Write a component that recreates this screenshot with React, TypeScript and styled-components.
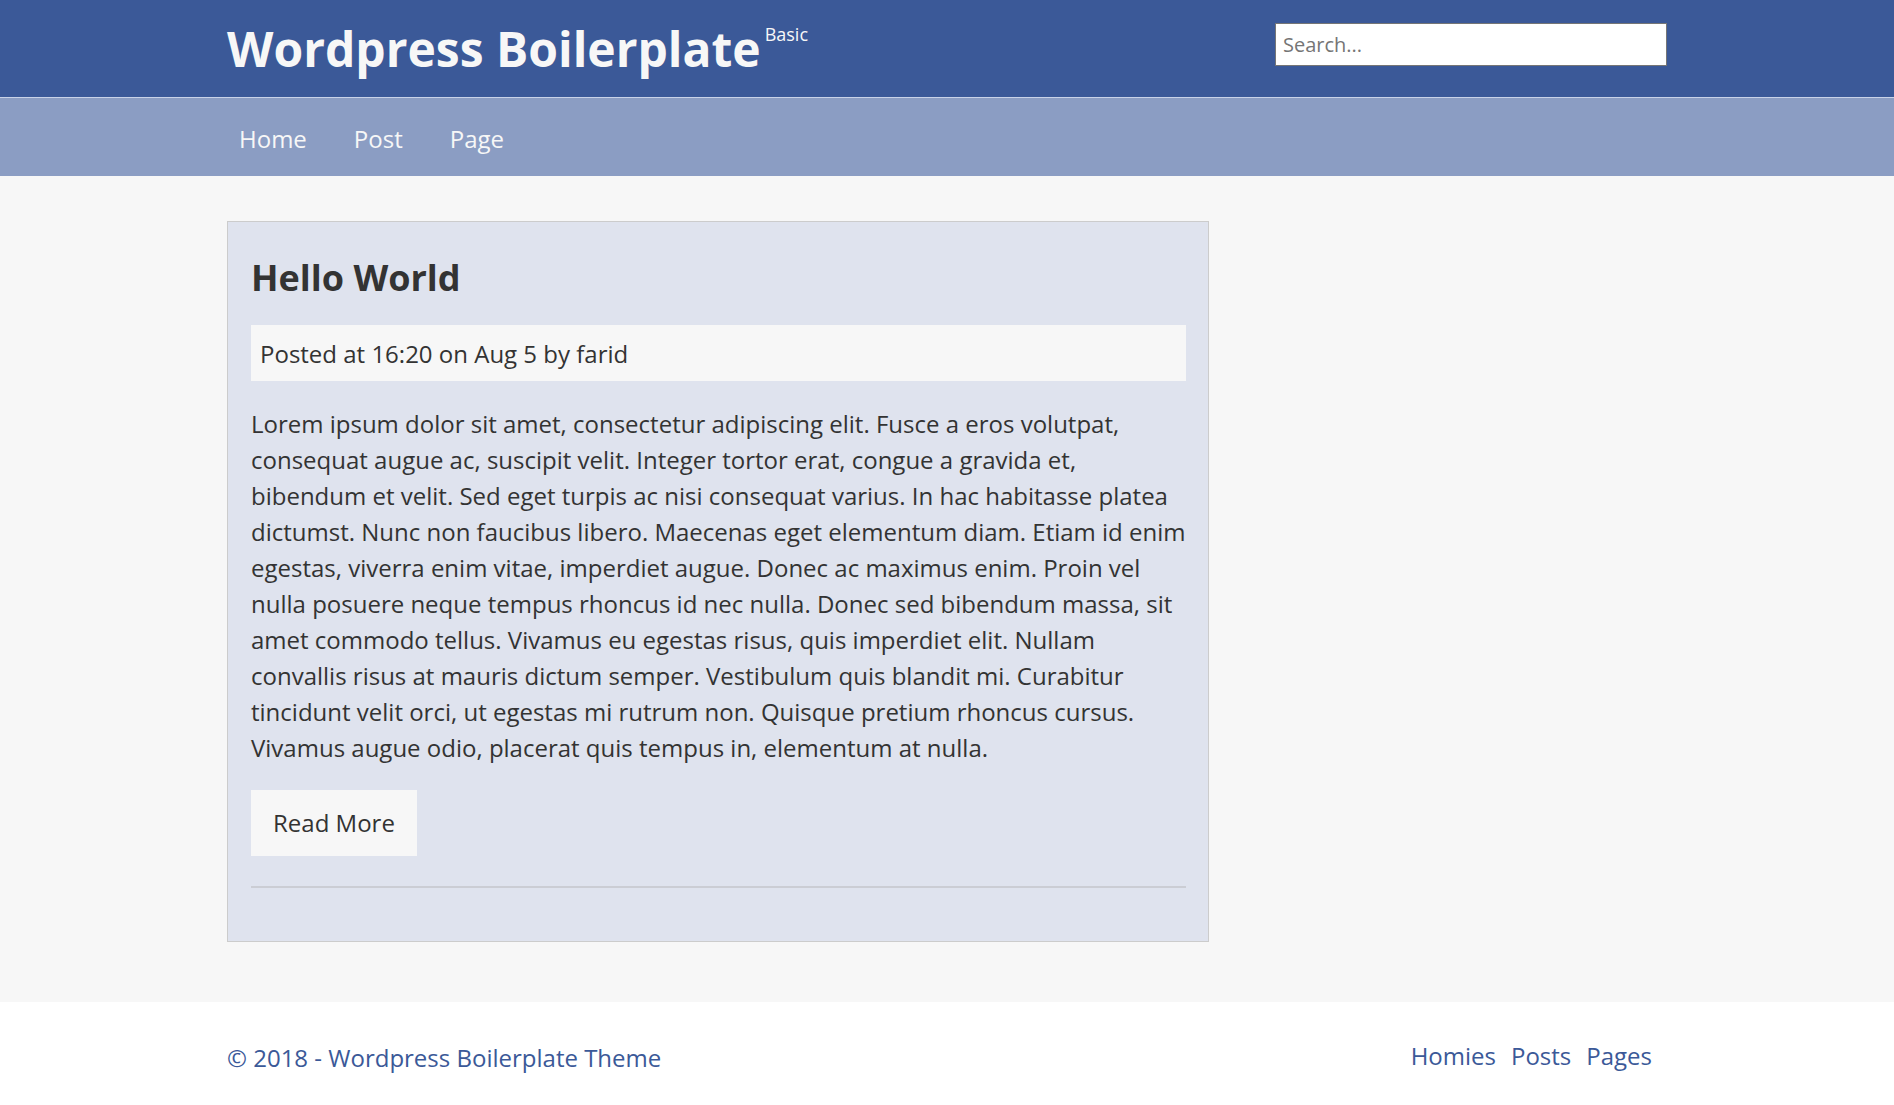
import React from 'react';
import styled, { createGlobalStyle } from 'styled-components';

const GlobalStyle = createGlobalStyle`
    body {
        margin: 0;
        font-family: "Open Sans", "Liberation Sans", sans-serif;
        background: #ffffff;
        color: #333333;
    }
`;

const Container = styled.div`
    width: 1440px;
    margin: 0 auto;
`;

const Header = styled.header`
    background: #3b5998;
    border-bottom: 1px solid #c9d3e8;
`;

const HeaderInner = styled(Container)`
    height: 97px;
    display: flex;
    align-items: center;
    justify-content: space-between;
`;

const Brand = styled.div`
    display: flex;
    align-items: flex-start;
    color: #f7f7f7;
`;

const BrandTitle = styled.h1`
    margin: 0;
    font-size: 48px;
    line-height: 48px;
    font-weight: 700;
`;

const BrandTag = styled.span`
    margin-left: 4px;
    font-size: 18px;
    line-height: 18px;
    font-weight: 400;
`;

const SearchInput = styled.input`
    width: 392px;
    height: 43px;
    margin-bottom: 8px;
    box-sizing: border-box;
    border: 1px solid #767676;
    padding: 0 7px;
    font-family: "Open Sans", "Liberation Sans", sans-serif;
    font-size: 20px;
    color: #333;
    background: #fff;
    outline: none;

    &::placeholder {
        color: #757575;
    }
`;

const Nav = styled.nav`
    background: #8b9dc3;
`;

const NavInner = styled(Container)`
    height: 78px;
    display: flex;
    align-items: center;
    gap: 23px;
`;

const NavLink = styled.a`
    margin-top: 3px;
    padding: 0 12px;
    font-size: 24px;
    line-height: 36px;
    color: #f7f7f7;
    text-decoration: none;
`;

const Main = styled.main`
    background: #f7f7f7;
    padding: 45px 0 60px;
`;

const Card = styled.article`
    width: 982px;
    box-sizing: border-box;
    background: #dfe3ee;
    border: 1px solid #cccccc;
    padding: 23px 22px 53px 23px;
`;

const PostTitle = styled.h2`
    margin: 11px 0 26px;
    font-size: 36px;
    line-height: 43px;
    font-weight: 700;
    color: #333333;
`;

const Meta = styled.div`
    background: #f7f7f7;
    padding: 11px 9px 9px;
    font-size: 24px;
    line-height: 36px;
`;

const Body = styled.p`
    margin: 25px 0 24px;
    font-size: 24px;
    line-height: 36px;
`;

const ReadMore = styled.a`
    display: inline-block;
    background: #f7f7f7;
    padding: 15px 22px;
    font-size: 24px;
    line-height: 36px;
    color: #333333;
    text-decoration: none;
`;

const Divider = styled.hr`
    margin: 30px 0 0;
    border: none;
    border-top: 2px solid #cbcdd4;
`;

const Footer = styled.footer`
    background: #ffffff;
`;

const FooterInner = styled(Container)`
    display: flex;
    align-items: center;
    justify-content: space-between;
    padding: 38px 0 31px;
`;

const Copy = styled.span`
    font-size: 24px;
    line-height: 36px;
    color: #3b5998;
`;

const FooterLinks = styled.div`
    display: flex;
    gap: 15px;
    padding-right: 15px;
    margin-top: -4px;
`;

const FooterLink = styled.a`
    font-size: 24px;
    line-height: 36px;
    color: #3b5998;
    text-decoration: none;
`;

const menu = ['Home', 'Post', 'Page'];
const footerMenu = ['Homies', 'Posts', 'Pages'];

const lorem =
    'Lorem ipsum dolor sit amet, consectetur adipiscing elit. Fusce a eros volutpat, consequat augue ac, suscipit velit. Integer tortor erat, congue a gravida et, bibendum et velit. Sed eget turpis ac nisi consequat varius. In hac habitasse platea dictumst. Nunc non faucibus libero. Maecenas eget elementum diam. Etiam id enim egestas, viverra enim vitae, imperdiet augue. Donec ac maximus enim. Proin vel nulla posuere neque tempus rhoncus id nec nulla. Donec sed bibendum massa, sit amet commodo tellus. Vivamus eu egestas risus, quis imperdiet elit. Nullam convallis risus at mauris dictum semper. Vestibulum quis blandit mi. Curabitur tincidunt velit orci, ut egestas mi rutrum non. Quisque pretium rhoncus cursus. Vivamus augue odio, placerat quis tempus in, elementum at nulla.';

const App: React.FC = () => {
    return (
        <>
            <GlobalStyle />
            <Header>
                <HeaderInner>
                    <Brand>
                        <BrandTitle>Wordpress Boilerplate</BrandTitle>
                        <BrandTag>Basic</BrandTag>
                    </Brand>
                    <SearchInput type="search" placeholder="Search..." />
                </HeaderInner>
            </Header>
            <Nav>
                <NavInner>
                    {menu.map(item => (
                        <NavLink key={item} href="#">{item}</NavLink>
                    ))}
                </NavInner>
            </Nav>
            <Main>
                <Container>
                    <Card>
                        <PostTitle>Hello World</PostTitle>
                        <Meta>Posted at 16:20 on Aug 5 by farid</Meta>
                        <Body>{lorem}</Body>
                        <ReadMore href="#">Read More</ReadMore>
                        <Divider />
                    </Card>
                </Container>
            </Main>
            <Footer>
                <FooterInner>
                    <Copy>© 2018 - Wordpress Boilerplate Theme</Copy>
                    <FooterLinks>
                        {footerMenu.map(item => (
                            <FooterLink key={item} href="#">{item}</FooterLink>
                        ))}
                    </FooterLinks>
                </FooterInner>
            </Footer>
        </>
    );
};

export default App;
